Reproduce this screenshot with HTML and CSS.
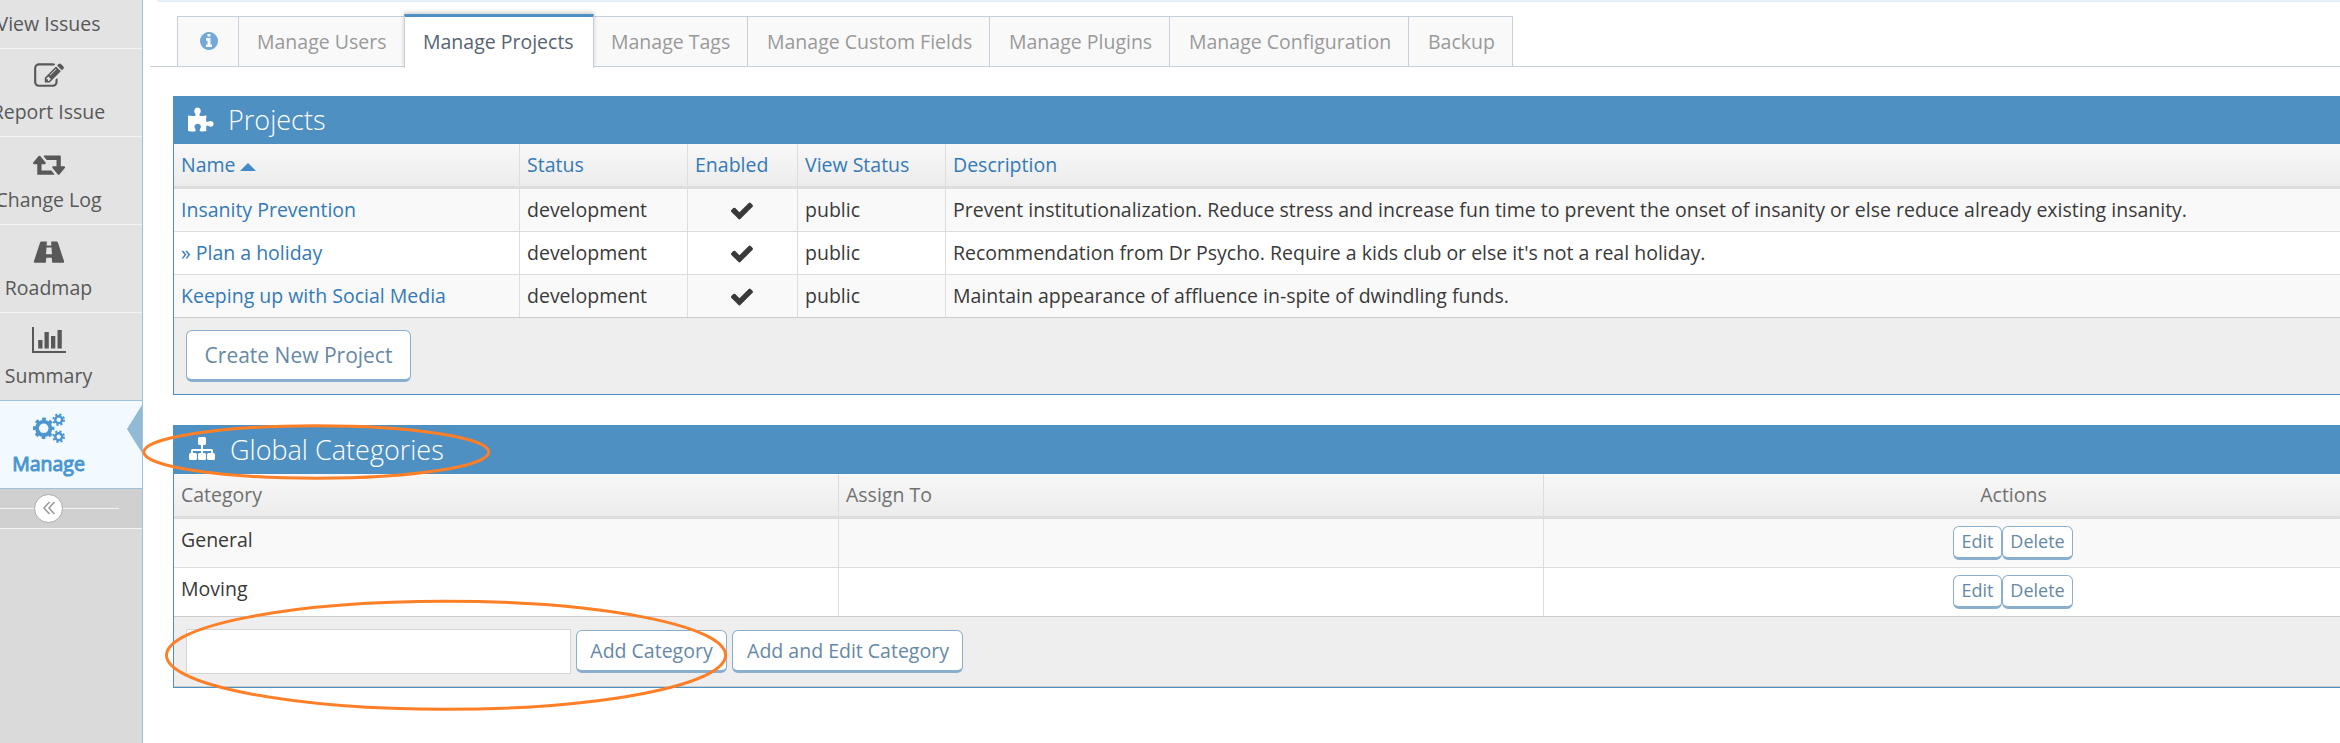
FILE: index.html
```html
<!DOCTYPE html>
<html lang="en">
<head>
<meta charset="utf-8">
<title>Manage Projects</title>
<link rel="stylesheet" href="styles.css">
</head>
<body>
<div class="page">
  <aside class="sidebar">
    <nav class="menu">
      <a class="item"><svg class="icon" viewBox="0 0 32 32"></svg><span class="label">View Issues</span></a>
      <a class="item"><svg class="icon" viewBox="0 0 32 32"><path transform="translate(1.1 2.200) scale(.0167)" d="M888 1184l116-116-152-152-116 116v56h96v96h56zm440-720q-16-16-33 1l-350 350q-17 17-1 33t33-1l350-350q17-17 1-33zm80 594v190q0 119-84.500 203.500t-203.500 84.500h-832q-119 0-203.500-84.500t-84.500-203.500v-832q0-119 84.500-203.500t203.500-84.500h832q63 0 117 25 15 7 18 23 3 17-9 29l-49 49q-14 14-32 8-23-6-45-6h-832q-66 0-113 47t-47 113v832q0 66 47 113t113 47h832q66 0 113-47t47-113v-126q0-13 9-22l64-64q15-15 35-7t20 29zm-96-738l288 288-672 672h-288v-288zm444 132l-92 92-288-288 92-92q28-28 68-28t68 28l152 152q28 28 28 68t-28 68z"/></svg><span class="label">Report Issue</span></a>
      <a class="item"><svg class="icon" viewBox="0 0 32 32"><path transform="translate(0 2.200) scale(.0167)" d="M1280 1504q0 13-9.500 22.500t-22.500 9.500h-960q-8 0-13.500-2t-9-7-5.500-8-3-11.500-1-11.500v-600h-192q-26 0-45-19t-19-45q0-24 15-41l320-384q19-22 49-22t49 22l320 384q15 17 15 41 0 26-19 45t-45 19h-192v384h576q16 0 25 11l160 192q7 10 7 21zm640-416q0 24-15 41l-320 384q-20 23-49 23t-49-23l-320-384q-15-17-15-41 0-26 19-45t45-19h192v-384h-576q-16 0-25-12l-160-192q-7-9-7-20 0-13 9.500-22.500t22.500-9.500h960q8 0 13.500 2t9 7 5.500 8 3 11.500 1 11.500v600h192q26 0 45 19t19 45z"/></svg><span class="label">Change Log</span></a>
      <a class="item"><svg class="icon" viewBox="0 0 32 32"><path fill-rule="evenodd" d="M8.500 6.500h5.400l-.3 4h4.800l-.3-4h5.400q1 0 1.400 1L31 26q.5 1.800-.8 1.800H19.200l-.5-5h-5.400l-.5 5H1.800Q.5 27.800 1 26L7.100 7.500q.4-1 1.400-1zM13.500 12.500l-.5 6.800h6l-.5-6.800z"/></svg><span class="label">Roadmap</span></a>
      <a class="item"><svg class="icon icon-chart" viewBox="0 0 34 32"><path d="M0 4h2v24h32v2H0zM6.200 17h4.300v8.500H6.200zM12.500 9h4.300v16.500h-4.300zM19 13h4.300v12.500H19zM25.500 7h4.300v18.500h-4.300z"/></svg><span class="label">Summary</span></a>
      <a class="item active"><svg class="icon" viewBox="0 0 32 32"><g fill="none" stroke="currentColor"><circle cx="10.700" cy="17.300" r="6.700" stroke-width="3.800"/><circle cx="10.700" cy="17.300" r="9.300" stroke-width="2.800" stroke-dasharray="3.700 3.604" stroke-dashoffset="1.850"/><circle cx="25.700" cy="8.700" r="3.400" stroke-width="2.400"/><circle cx="25.700" cy="8.700" r="5.300" stroke-width="2" stroke-dasharray="2.200 1.963"/><circle cx="25.700" cy="25.700" r="3.400" stroke-width="2.400"/><circle cx="25.700" cy="25.700" r="5.300" stroke-width="2" stroke-dasharray="2.200 1.963"/></g></svg><span class="label">Manage</span><i class="arrow"></i></a>
    </nav>
    <div class="collapse"><span class="rule"></span><span class="knob"><svg width="14" height="14" viewBox="0 0 14 14"><path d="M7.500 1L2 7l5.500 6M12.500 1L7 7l5.500 6"/></svg></span><span class="rule"></span></div>
  </aside>
  <main class="main">
    <div class="topbar"></div>
    <ul class="tabs">
      <li class="tab tab-info"><svg width="18" height="18" viewBox="128 128 1536 1536"><path d="M1152 1376v-160q0-14-9-23t-23-9h-96v-512q0-14-9-23t-23-9h-320q-14 0-23 9t-9 23v160q0 14 9 23t23 9h96v320h-96q-14 0-23 9t-9 23v160q0 14 9 23t23 9h448q14 0 23-9t9-23zm-128-896v-160q0-14-9-23t-23-9h-192q-14 0-23 9t-9 23v160q0 14 9 23t23 9h192q14 0 23-9t9-23zm640 416q0 209-103 385.500t-279.500 279.500-385.500 103-385.500-103-279.500-279.500-103-385.500 103-385.500 279.500-279.500 385.500-103 385.500 103 279.500 279.500 103 385.500z"/></svg></li>
      <li class="tab w-users">Manage Users</li>
      <li class="tab w-projects current">Manage Projects</li>
      <li class="tab w-tags">Manage Tags</li>
      <li class="tab w-fields">Manage Custom Fields</li>
      <li class="tab w-plugins">Manage Plugins</li>
      <li class="tab w-config">Manage Configuration</li>
      <li class="tab w-backup">Backup</li>
    </ul>

    <section class="panel projects">
      <h4 class="head"><svg class="head-icon" width="26" height="25" viewBox="0 0 26 25"><path d="M0 8.500q4 .8 7.300.3.900-.6-.2-2.300Q5.800 4.500 6.500 2.500 7.500.5 9.500.5t3 2q.7 2-.6 4-1.100 1.700-.2 2.300 3.300.5 6.800-.3-.7 3.500-.2 6 .7 1 2.200.1 2.300-1.400 4 0 1.500 1.300 1 3.200-.6 2-2.700 2-1 0-2.200-.8-1.600-.9-2.300.3-.4 2.200.2 4.700-3.200.8-6.500.3-.9-.8.200-2.500 1.300-2 .3-3.600-1-1.500-2.800-1.500-2 0-2.900 1.500-.9 1.700.4 3.600 1.100 1.800.1 2.500-3.300.6-7.300-.3z"/></svg><span class="title">Projects</span></h4>
      <div class="row thead links"><span class="cell">Name <i class="caret"></i></span><span class="cell">Status</span><span class="cell">Enabled</span><span class="cell">View Status</span><span class="cell">Description</span></div>
      <div class="row odd"><span class="cell"><a>Insanity Prevention</a></span><span class="cell">development</span><span class="cell mid"><svg class="check" viewBox="121 334 1550 1188"><use href="#check"/></svg></span><span class="cell">public</span><span class="cell">Prevent institutionalization. Reduce stress and increase fun time to prevent the onset of insanity or else reduce already existing insanity.</span></div>
      <div class="row"><span class="cell"><a>» Plan a holiday</a></span><span class="cell">development</span><span class="cell mid"><svg class="check" viewBox="121 334 1550 1188"><use href="#check"/></svg></span><span class="cell">public</span><span class="cell">Recommendation from Dr Psycho. Require a kids club or else it's not a real holiday.</span></div>
      <div class="row odd"><span class="cell"><a>Keeping up with Social Media</a></span><span class="cell">development</span><span class="cell mid"><svg class="check" viewBox="121 334 1550 1188"><use href="#check"/></svg></span><span class="cell">public</span><span class="cell">Maintain appearance of affluence in-spite of dwindling funds.</span></div>
      <div class="toolbox"><button class="btn large">Create New Project</button></div>
    </section>

    <section class="panel categories">
      <h4 class="head"><svg class="head-icon" width="28" height="26" viewBox="0 0 28 26"><path d="M11.500 1h5q1.500 0 1.500 1.500v5Q18 9 16.500 9H15v4h8.500q1.500 0 1.500 1.500V17h.5q1.500 0 1.500 1.500v4q0 1.500-1.500 1.500h-5q-1.500 0-1.500-1.500v-4q0-1.500 1.500-1.500H23v-2h-8v2h1.500q1.500 0 1.500 1.500v4q0 1.500-1.500 1.500h-5q-1.500 0-1.500-1.500v-4q0-1.500 1.500-1.500H13v-2H5v2h2.500Q9 17 9 18.500v4Q9 24 7.500 24h-5Q1 24 1 22.500v-4Q1 17 2.500 17H3v-2.500Q3 13 4.500 13H13V9h-1.500Q10 9 10 7.500v-5Q10 1 11.500 1z"/></svg><span class="title">Global Categories</span></h4>
      <div class="row thead"><span class="cell">Category</span><span class="cell">Assign To</span><span class="cell mid">Actions</span></div>
      <div class="row odd"><span class="cell">General</span><span class="cell"></span><span class="cell mid"><button class="btn small">Edit</button><button class="btn small">Delete</button></span></div>
      <div class="row"><span class="cell">Moving</span><span class="cell"></span><span class="cell mid"><button class="btn small">Edit</button><button class="btn small">Delete</button></span></div>
      <div class="toolbox"><input class="field" type="text"><button class="btn add">Add Category</button><button class="btn add-edit">Add and Edit Category</button></div>
    </section>
  </main>
</div>
<svg class="marks" width="2340" height="743"><defs><path id="check" d="M1671 566q0 40-28 68l-724 724-136 136q-28 28-68 28t-68-28l-136-136-362-362q-28-28-28-68t28-68l136-136q28-28 68-28t68 28l294 295 656-657q28-28 68-28t68 28l136 136q28 28 28 68z"/></defs><ellipse cx="316.300" cy="452" rx="172.500" ry="26.300"/><ellipse cx="446" cy="655.300" rx="279.500" ry="54"/></svg>
</body>
</html>
```
FILE: styles.css
```css
* { box-sizing: border-box; }
body { margin: 0; width: 2340px; height: 743px; overflow: hidden; background: #fff; font: 19.5px/29px "Open Sans", sans-serif; color: #393939; }
.page { display: flex; width: 2340px; height: 743px; overflow: hidden; }

.sidebar { width: 143px; flex: none; background: #dadada; border-right: 1px solid #9dc3da; overflow: hidden; }
.menu { margin-top: -39px; }
.item { position: relative; display: flex; flex-direction: column; align-items: center; height: 88px; margin-left: -45px; padding: 10px 0 0; border-bottom: 1px solid #f3f3f3; background: #e3e3e3; color: #585858; }
.icon { width: 32px; height: 32px; fill: currentColor; }
.icon-chart { width: 34px; }
.label { margin-top: 6px; line-height: 30px; }
.item:nth-child(5) { border-bottom-color: #9dc3da; }
.active { background: #f2f9ff; color: #4b96cf; border-bottom-color: #9dc3da; }
.active .label { -webkit-text-stroke: 1px currentColor; }
.arrow { position: absolute; right: 0; top: 4px; border: solid transparent; border-width: 24px 15px 24px 0; border-right-color: #91bad6; }
.collapse { display: flex; align-items: center; height: 40px; padding-bottom: 1px; background: #d0d0d0; border-bottom: 1px solid #f3f3f3; }
.rule { width: 34px; height: 1px; background: #f3f3f3; }
.rule:last-child { width: 56px; }
.knob { display: grid; place-items: center; width: 29px; height: 29px; border: 1px solid #aaa; border-radius: 50%; background: #fff; }
.knob path { fill: none; stroke: #999; stroke-width: 1.500; }

.main { flex: none; width: 2340px; padding-left: 7px; }
.topbar { height: 2px; margin-left: 7px; background: #e4f0f9; border-radius: 0 0 0 4px; }
.tabs { display: flex; margin: 14px 0 29px; padding: 0 0 0 27px; height: 51px; border-bottom: 1px solid #c5d0dc; list-style: none; }
.tab { height: 51px; padding: 10px 0 0 19px; border: 1px solid #c5d0dc; border-left-width: 0; background: #f9f9f9; color: #999; white-space: nowrap; }
.tab-info { width: 62px; border-left-width: 1px; padding: 15px 0 0 22px; }
.tab-info svg { display: block; fill: #73a9d8; }
.w-users { width: 165px; padding-left: 18px; border-right: 0; }
.w-projects { width: 190px; padding-left: 18px; }
.w-tags { width: 154px; padding-left: 17px; }
.w-fields { width: 242px; }
.w-plugins { width: 180px; }
.w-config { width: 239px; }
.w-backup { width: 104px; }
.current { position: relative; height: 54px; margin-top: -2px; padding-top: 10px; border-left-width: 1px; border-top: 3px solid #4f90c2; border-bottom: 0; background: #fff; color: #576373; box-shadow: 0 -2px 4px rgba(0,0,0,.18); clip-path: inset(-8px -6px 0 -6px); }

.panel { margin-left: 23px; border: 1px solid #4f90c2; border-top: 0; }
.head { display: flex; align-items: center; height: 48px; margin: 0; padding: 0 0 0 14px; background: #4f90c2; color: #fff; font-size: 27px; font-weight: 300; }
.head-icon { margin-right: 14px; margin-top: -2px; fill: #fff; }
.title { margin-top: -1px; }
.row { display: grid; height: 43px; border-bottom: 1px solid #ddd; }
.projects .row { grid-template-columns: 345px 168px 110px 148px 1fr; }
.categories .row { grid-template-columns: 664px 705px 1fr; height: 49px; }
.odd { background: #f9f9f9; }
.cell { padding: 6px 0 0 7px; border-left: 1px solid #ddd; white-space: nowrap; }
.cell:first-child { border-left: 0; }
.cell.mid { padding-left: 0; text-align: center; }
.cell a { color: #337ab7; }
.panel .thead { height: 45px; border-bottom: 3px solid #ddd; background: linear-gradient(#f8f8f8, #ececec); color: #707070; }
.panel .links { color: #337ab7; }
.caret { display: inline-block; margin-left: -1px; border: solid transparent; border-width: 0 8px 8px; border-bottom-color: #428bca; vertical-align: 1px; }
.check { width: 22px; height: 18px; margin: 7px 2px 0 0; fill: #393939; }
.toolbox { height: 76px; padding: 12px; background: #eee; box-shadow: 0 -1px #ccc; }
.btn { height: 43px; padding: 0 0 1px; border: 1px solid #8aafce; border-bottom-width: 3px; border-radius: 6px; background: #fff; color: #6688a6; font: 19.5px "Open Sans", sans-serif; }
.large { width: 225px; height: 52px; font-size: 21px; }
.categories { margin-top: 30px; width: 2310px; }
.categories .head { height: 49px; }
.categories .row .mid { width: 940px; }
.categories .toolbox { display: flex; height: 70px; padding-top: 12px; border-bottom: 1px solid #ccc; }
.categories .small { height: 34px; width: 49px; margin-top: 1px; padding-bottom: 2px; font-size: 18px; vertical-align: top; }
.categories .small + .small { width: 71px; margin-right: 1px; }
.field { width: 385px; height: 45px; border: 1px solid #d5d5d5; background: #fff; }
.add { width: 151px; margin: 1px 5px 0; }
.add-edit { width: 231px; margin-top: 1px; padding-left: 1px; }
.marks { position: absolute; left: 0; top: 0; fill: none; stroke: #ff7f27; stroke-width: 3; pointer-events: none; }
.check use { stroke: none; }
```
